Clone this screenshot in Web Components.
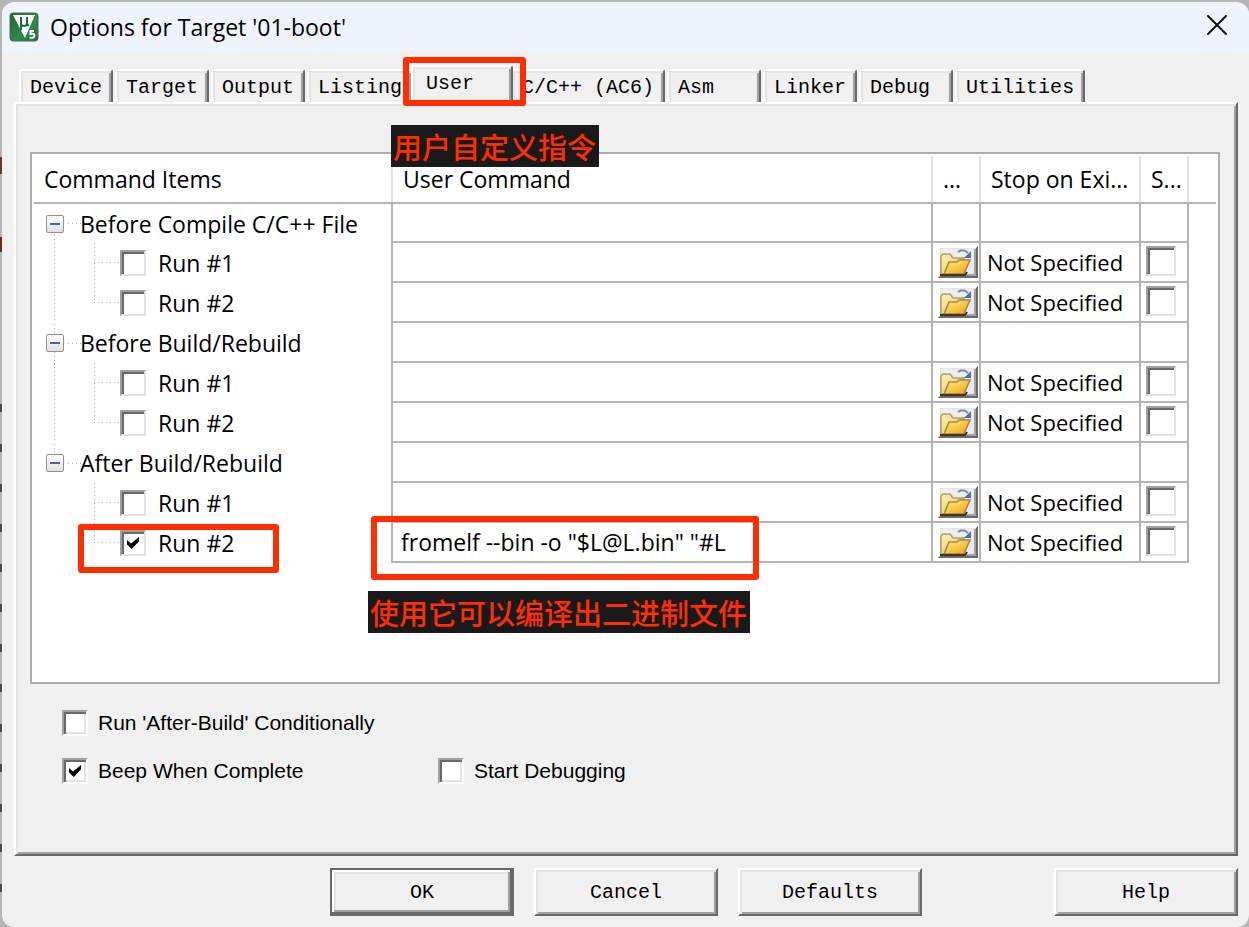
<!DOCTYPE html>
<html lang="en">
<head>
<meta charset="utf-8">
<title>Options for Target '01-boot'</title>
<style>
  /* the editor window shows as a thin strip of marks left of the dialog */
  body {
    margin: 0;
    background:
      linear-gradient(#6b3a1c, #6b3a1c) 0 157px / 2px 17px no-repeat,
      linear-gradient(#6b2c1c, #6b2c1c) 0 237px / 2px 15px no-repeat,
      repeating-linear-gradient(#4a4a55 0 8px, transparent 8px 40px) 0 404px / 2px 490px no-repeat,
      #b4b4b4;
    font-family: "Open Sans", "Noto Sans CJK SC", sans-serif;
    font-size: 23px;
    color: #000;
  }
</style>
</head>
<body>
<options-dialog>
  <span slot="title">Options for Target '01-boot'</span>

  <tab-strip slot="tabs">
    <tab-item>Device</tab-item>
    <tab-item>Target</tab-item>
    <tab-item>Output</tab-item>
    <tab-item>Listing</tab-item>
    <tab-item selected>User</tab-item>
    <tab-item>C/C++ (AC6)</tab-item>
    <tab-item>Asm</tab-item>
    <tab-item>Linker</tab-item>
    <tab-item>Debug</tab-item>
    <tab-item>Utilities</tab-item>
  </tab-strip>

  <command-table></command-table>
  <build-options></build-options>

  <push-button slot="buttons" default>OK</push-button>
  <push-button slot="buttons">Cancel</push-button>
  <push-button slot="buttons">Defaults</push-button>
  <push-button slot="buttons" apart>Help</push-button>
</options-dialog>

<mark-box style="left: 403px; top: 57px; width: 123px; height: 49px"></mark-box>
<mark-box style="left: 78px; top: 524px; width: 201px; height: 49px"></mark-box>
<mark-box style="left: 371px; top: 516px; width: 388px; height: 64px"></mark-box>
<mark-note style="left: 391px; top: 125px">用户自定义指令</mark-note>
<mark-note style="left: 368px; top: 591px">使用它可以编译出二进制文件</mark-note>

<script>
class OptionsDialog extends HTMLElement {
  constructor() {
    super();
    this.attachShadow({ mode: "open" });
    this.shadowRoot.innerHTML = `
      <style>
        :host {
          display: flex;
          flex-direction: column;
          box-sizing: border-box;
          min-height: 100vh;
          margin-left: 2px;
          border-top: 2px solid #b9b9b9;
          border-radius: 14px 14px 12px 12px;
          background: #f0f0f0;
          overflow: hidden;
        }

        header {
          display: flex;
          align-items: center;
          height: 50px;
          padding: 0 22px 0 7px;
          background: #eff3fb;
        }

        h1 {
          flex: 1;
          margin: 0 0 0 11px;
          font-size: 23px;
          font-weight: normal;
          line-height: 32px;
        }

        .close {
          width: 20px;
          height: 20px;
          margin-bottom: 4px;
          padding: 0;
          border: 0;
          background: none;
        }

        svg {
          display: block;
        }

        .panel {
          flex: 1;
          display: flex;
          flex-direction: column;
          margin: 0 11px 0 12px;
          padding: 48px 16px 0 14px;
          border: 2px solid;
          border-color: #fff #696969 #696969 #fff;
          box-shadow: inset 2px 2px #e3e3e3, inset -2px -2px #a0a0a0;
        }

        footer {
          display: flex;
          justify-content: flex-end;
          gap: 20px;
          padding: 12px 11px 11px;
        }
      </style>
      <header>
        <svg width="30" height="30" viewBox="0 0 30 30" aria-hidden="true">
          <defs>
            <linearGradient id="green" x2="1" y2="1">
              <stop offset="0" stop-color="#1f6336"/>
              <stop offset="0.6" stop-color="#2f8a4c"/>
              <stop offset="1" stop-color="#1f6a38"/>
            </linearGradient>
          </defs>
          <rect x="1" y="1" width="28" height="28" rx="3" fill="url(#green)" stroke="#4d6a58"/>
          <path d="M4 3H26L16 26Z" fill="#fff"/>
          <path d="M12 5V18M12 6V11Q12 14 15 14Q18 14 18 11V5M18 11Q18 14 20 13" fill="none" stroke="#1f6a38" stroke-width="2"/>
          <path d="M25 19H21.500V22Q25.500 21 25.500 23.500Q25.500 26.500 20.500 25.500" fill="none" stroke="#fff" stroke-width="2"/>
        </svg>
        <h1><slot name="title"></slot></h1>
        <button class="close" aria-label="Close">
          <svg width="20" height="20" viewBox="0 0 20 20">
            <path d="M1 1L19 19M19 1L1 19" stroke="#111" stroke-width="2" stroke-linecap="round"/>
          </svg>
        </button>
      </header>
      <slot name="tabs"></slot>
      <div class="panel"><slot></slot></div>
      <footer><slot name="buttons"></slot></footer>
    `;
  }
}

class TabStrip extends HTMLElement {
  constructor() {
    super();
    this.attachShadow({ mode: "open" });
    this.shadowRoot.innerHTML = `
      <style>
        :host {
          display: flex;
          align-items: flex-end;
          gap: 2px;
          height: 50px;
          padding-left: 17px;
        }
      </style>
      <slot></slot>
    `;
    this.setAttribute("role", "tablist");
  }
}

class TabItem extends HTMLElement {
  constructor() {
    super();
    this.attachShadow({ mode: "open" });
    this.shadowRoot.innerHTML = `
      <style>
        :host {
          display: block;
        }

        button {
          display: block;
          box-sizing: border-box;
          min-width: 94px;
          height: 33px;
          padding: 2px 9px 0;
          border: solid;
          border-width: 2px 2px 0 2px;
          border-color: #fff #696969 #fff #fff;
          border-radius: 3px 3px 0 0;
          background: #f0f0f0;
          box-shadow: inset 2px 2px #e3e3e3, inset -2px 0 #a0a0a0;
          color: #000;
          font: 20px/28px "Liberation Mono", monospace;
          text-align: left;
          white-space: nowrap;
        }

        /* the selected tab is raised and overlaps its neighbours */
        :host([selected]) {
          position: relative;
          margin: 0 -4px;
        }

        :host([selected]) button {
          min-width: 102px;
          height: 37px;
          padding: 0 13px 2px;
        }
      </style>
      <button role="tab"><slot></slot></button>
    `;
  }
}

class CheckBox extends HTMLElement {
  constructor() {
    super();
    this.attachShadow({ mode: "open" });
    this.shadowRoot.innerHTML = `
      <style>
        :host {
          display: inline-flex;
        }

        label {
          display: flex;
          align-items: center;
          gap: var(--check-gap, 12px);
          white-space: nowrap;
        }

        input {
          appearance: none;
          display: grid;
          place-items: center;
          box-sizing: border-box;
          width: var(--check-size, 26px);
          height: var(--check-size, 26px);
          margin: 0;
          border: 2px solid;
          border-color: #a0a0a0 var(--check-edge, #e3e3e3) var(--check-edge, #e3e3e3) #a0a0a0;
          background: #fff;
          box-shadow: inset 2px 2px #696969, inset -2px -2px var(--check-inner, #fff);
        }

        input:checked::before {
          content: "";
          width: 12px;
          height: 12px;
          background: #000;
          clip-path: polygon(0 25%, 33% 55%, 100% 0, 100% 35%, 40% 100%, 0 62%);
        }
      </style>
      <label><input type="checkbox"><slot></slot></label>
    `;
  }

  connectedCallback() {
    const input = this.shadowRoot.querySelector("input");
    input.checked = this.hasAttribute("checked");
    if (this.hasAttribute("name")) {
      input.setAttribute("aria-label", this.getAttribute("name"));
    }
  }
}

class BrowseButton extends HTMLElement {
  constructor() {
    super();
    this.attachShadow({ mode: "open" });
    this.shadowRoot.innerHTML = `
      <style>
        :host {
          display: block;
        }

        button {
          display: block;
          box-sizing: border-box;
          width: 40px;
          height: 32px;
          padding: 0;
          border: 2px solid;
          border-color: #fff #696969 #696969 #fff;
          background: #ececee;
          box-shadow: inset 1px 1px #e3e3e3, inset -2px -2px #a0a0a0;
        }

        svg {
          display: block;
        }
      </style>
      <button aria-label="Browse">
        <svg width="34" height="28" viewBox="0 0 34 28">
          <defs>
            <linearGradient id="back" x2="1" y2="1">
              <stop offset="0" stop-color="#fff6b8"/>
              <stop offset="1" stop-color="#e8be50"/>
            </linearGradient>
            <linearGradient id="front" x2="1" y2="1">
              <stop offset="0" stop-color="#ffe890"/>
              <stop offset="0.500" stop-color="#fcc944"/>
              <stop offset="1" stop-color="#e89a10"/>
            </linearGradient>
          </defs>
          <path d="M1 26V8L3 6H10L13 10H24V14L23 26Z" fill="url(#back)" stroke="#b09c68" stroke-width="1.500"/>
          <path d="M4 26L9 14H17L19 12H30L24 26Z" fill="url(#front)" stroke="#a08450" stroke-width="1.500"/>
          <path d="M0 27H25L27 24" fill="none" stroke="#3c3424" stroke-width="2"/>
          <path d="M18 4Q23 0 28 5" fill="none" stroke="#7088ac" stroke-width="2"/>
          <path d="M31 3V10H24Z" fill="#56709c"/>
        </svg>
      </button>
    `;
  }
}

class CommandTable extends HTMLElement {
  constructor() {
    super();
    this._groups = [
      { name: "Before Compile C/C++ File", runs: [{}, {}] },
      { name: "Before Build/Rebuild", runs: [{}, {}] },
      { name: "After Build/Rebuild", runs: [{}, { checked: true, command: 'fromelf --bin -o "$L@L.bin" "#L' }] },
    ];
    this.attachShadow({ mode: "open" });
    this.shadowRoot.innerHTML = `
      <style>
        :host {
          display: block;
          flex: 1;
          padding: 2px;
          border: 2px solid #abadb3;
          background: #fff;
        }

        table {
          width: 100%;
          table-layout: fixed;
          border-collapse: separate;
          border-spacing: 0;
        }

        th, td {
          box-sizing: border-box;
          padding: 0;
          text-align: left;
          font-weight: normal;
        }

        th {
          height: 48px;
          padding: 0 0 0 10px;
          border-bottom: 2px solid #b4b4b4;
          overflow: hidden;
          white-space: nowrap;
        }

        th + th {
          padding-left: 12px;
          background: linear-gradient(#e3e3e3, #e3e3e3) 0 0 / 2px 100% no-repeat;
        }

        td {
          height: 40px;
        }

        tbody tr:first-child td {
          height: 39px;
        }

        td + td {
          border-left: 2px solid #b4b4b4;
          border-bottom: 2px solid #b4b4b4;
        }

        td:last-child {
          border-bottom: 0;
        }

        .item {
          width: 357px;
        }

        .browse {
          width: 48px;
        }

        .stop {
          width: 160px;
        }

        .spawn {
          width: 48px;
        }

        .rest {
          width: 29px;
        }

        .tree {
          display: flex;
          align-items: center;
          height: 39px;
          --dots-down: repeating-linear-gradient(#a8a8a8 0 1px, transparent 1px 4px);
          --dots-across: repeating-linear-gradient(90deg, #a8a8a8 0 1px, transparent 1px 4px);
        }

        .group {
          padding-left: 12px;
          gap: 16px;
          background: var(--dots-across) 34px 19px / 13px 1px no-repeat,
            var(--dots-down) 20px 31px / 1px 8px no-repeat;
        }

        .group.inner {
          background: var(--dots-across) 34px 19px / 13px 1px no-repeat,
            var(--dots-down) 20px 0 / 1px 100% no-repeat;
        }

        .group.last {
          background: var(--dots-across) 34px 19px / 13px 1px no-repeat,
            var(--dots-down) 20px 0 / 1px 9px no-repeat;
        }

        .run {
          height: 40px;
          padding-left: 86px;
          background: var(--dots-across) 60px 19px / 25px 1px no-repeat,
            var(--dots-down) 60px 0 / 1px var(--branch) no-repeat,
            var(--dots-down) 20px 0 / 1px var(--trunk) no-repeat;
        }

        .expander {
          width: 18px;
          height: 18px;
          padding: 0;
          border: 1px solid #919191;
          border-radius: 2px;
          background: linear-gradient(#4560ac, #4560ac) center / 10px 2px no-repeat,
            linear-gradient(#fff, #e0e0e0);
        }

        input, select {
          appearance: none;
          display: block;
          box-sizing: border-box;
          width: 100%;
          height: 36px;
          padding: 0 8px;
          border: 0;
          background: none;
          color: inherit;
          font: inherit;
          line-height: 36px;
        }

        select {
          padding: 0 0 0 6px;
          font-size: 22px;
        }

        browse-button {
          margin-left: 5px;
        }

        .flag {
          display: flex;
          padding: 0 0 2px 5px;
          --check-size: 30px;
        }
      </style>
      <table>
        <thead>
          <tr>
            <th class="item">Command Items</th>
            <th>User Command</th>
            <th class="browse">...</th>
            <th class="stop">Stop on Exi...</th>
            <th class="spawn">S...</th>
            <th class="rest"></th>
          </tr>
        </thead>
        <tbody></tbody>
      </table>
    `;
  }

  connectedCallback() {
    const last = this._groups.length - 1;
    this.shadowRoot.querySelector("tbody").innerHTML = this._groups
      .map((group, i) => {
        const place = i === 0 ? "" : i === last ? "last" : "inner";
        const trunk = i === last ? "0px" : "100%";
        return this._groupRow(group, place) + group.runs.map((run, n) => this._runRow(run, n, group, trunk)).join("");
      })
      .join("");
  }

  _groupRow(group, place) {
    return `
      <tr>
        <td><div class="tree group ${place}"><button class="expander" aria-label="Collapse"></button>${group.name}</div></td>
        <td></td><td></td><td></td><td></td><td></td>
      </tr>
    `;
  }

  _runRow(run, n, group, trunk) {
    const branch = n === group.runs.length - 1 ? "20px" : "100%";
    const command = (run.command || "").replaceAll('"', "&quot;");
    return `
      <tr>
        <td><div class="tree run" style="--branch: ${branch}; --trunk: ${trunk}">
          <check-box ${run.checked ? "checked" : ""}>Run #${n + 1}</check-box>
        </div></td>
        <td><input type="text" aria-label="User command" value="${command}"></td>
        <td><browse-button></browse-button></td>
        <td><select aria-label="Stop on exit code"><option>Not Specified</option></select></td>
        <td><div class="flag"><check-box name="Spawn"></check-box></div></td>
        <td></td>
      </tr>
    `;
  }
}

class BuildOptions extends HTMLElement {
  constructor() {
    super();
    this.attachShadow({ mode: "open" });
    this.shadowRoot.innerHTML = `
      <style>
        :host {
          display: grid;
          grid-template-columns: 376px 1fr;
          grid-auto-rows: 48px;
          padding: 15px 0 59px 32px;
          font: 21px "Liberation Sans", sans-serif;
          --check-gap: 10px;
          --check-edge: #fff;
          --check-inner: #e3e3e3;
        }

        .wide {
          grid-column: 1 / -1;
        }
      </style>
      <check-box class="wide">Run 'After-Build' Conditionally</check-box>
      <check-box checked>Beep When Complete</check-box>
      <check-box>Start Debugging</check-box>
    `;
  }
}

class PushButton extends HTMLElement {
  constructor() {
    super();
    this.attachShadow({ mode: "open" });
    this.shadowRoot.innerHTML = `
      <style>
        :host {
          display: block;
        }

        :host([apart]) {
          margin-left: 112px;
        }

        button {
          box-sizing: border-box;
          width: 184px;
          height: 48px;
          padding: 2px 0 0;
          border: 2px solid;
          border-color: #fff #696969 #696969 #fff;
          background: #f0f0f0;
          box-shadow: inset 2px 2px #e3e3e3, inset -2px -2px #a0a0a0;
          color: #000;
          font: 20px/24px "Liberation Mono", monospace;
        }

        :host([default]) button {
          border-color: #696969;
          box-shadow: inset -2px -2px #696969, inset 2px 2px #fff,
            inset -4px -4px #a0a0a0, inset 4px 4px #e3e3e3;
        }
      </style>
      <button><slot></slot></button>
    `;
  }
}

class MarkBox extends HTMLElement {
  constructor() {
    super();
    this.attachShadow({ mode: "open" });
    this.shadowRoot.innerHTML = `
      <style>
        :host {
          position: absolute;
          box-sizing: border-box;
          border: 6px solid #ff2d00;
          border-radius: 3px;
          pointer-events: none;
        }
      </style>
    `;
  }
}

class MarkNote extends HTMLElement {
  constructor() {
    super();
    this.attachShadow({ mode: "open" });
    this.shadowRoot.innerHTML = `
      <style>
        :host {
          position: absolute;
          padding: 1px 3px 1px 2px;
          background: #1a1a1a;
          color: #ff2d00;
          font: 500 29px/40px "Noto Sans CJK SC", sans-serif;
          white-space: nowrap;
        }
      </style>
      <slot></slot>
    `;
  }
}

window.customElements.define("check-box", CheckBox);
window.customElements.define("browse-button", BrowseButton);
window.customElements.define("push-button", PushButton);
window.customElements.define("tab-item", TabItem);
window.customElements.define("tab-strip", TabStrip);
window.customElements.define("command-table", CommandTable);
window.customElements.define("build-options", BuildOptions);
window.customElements.define("options-dialog", OptionsDialog);
window.customElements.define("mark-box", MarkBox);
window.customElements.define("mark-note", MarkNote);
</script>
</body>
</html>
